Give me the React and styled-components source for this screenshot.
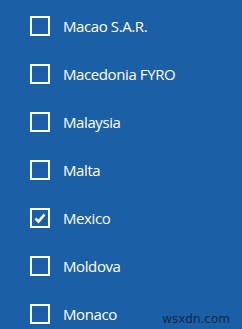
import React, {useState} from "react";
import styled, {createGlobalStyle} from "styled-components";

const GlobalStyle = createGlobalStyle`
    html, body {
        margin: 0;
        padding: 0;
        background: #1b5fa7;
        overflow: hidden;
    }
`;

const Page = styled.div`
    position: relative;
    width: 242px;
    height: 329px;
    background: #1b5fa7;
    font-family: "Open Sans", "Noto Sans", sans-serif;
    overflow: hidden;
`;

const List = styled.ul`
    list-style: none;
    margin: 0;
    padding: 2px 0 0 30px;
    display: flex;
    flex-direction: column;
`;

const Row = styled.li`
    display: flex;
    align-items: center;
    gap: 13px;
    height: 48px;
    cursor: pointer;
`;

const Box = styled.span`
    box-sizing: border-box;
    width: 20px;
    height: 20px;
    border: 2px solid #ffffff;
    display: flex;
    align-items: center;
    justify-content: center;
`;

const Label = styled.span`
    color: #ffffff;
    font-size: 15px;
    letter-spacing: -0.4px;
`;

const Watermark = styled.span`
    position: absolute;
    right: 12px;
    bottom: 3px;
    color: #13284a;
    font-family: "DejaVu Sans", sans-serif;
    font-size: 12px;
`;

const countries = ["Macao S.A.R.", "Macedonia FYRO", "Malaysia", "Malta", "Mexico", "Moldova", "Monaco"];

function App() {
    const [checked, setChecked] = useState({Mexico: true});

    return (
        <>
            <GlobalStyle />
            <Page>
                <List>
                    {countries.map((name) => (
                        <Row key={name} onClick={() => setChecked({...checked, [name]: !checked[name]})}>
                            <Box>
                                {checked[name] && (
                                    <svg width="14" height="14" viewBox="0 0 14 14">
                                        <path d="M2.5 7.5 L5.5 10.5 L11.5 3.5" fill="none" stroke="#fff" strokeWidth="2.6" />
                                    </svg>
                                )}
                            </Box>
                            <Label>{name}</Label>
                        </Row>
                    ))}
                </List>
                <Watermark>wsxdn.com</Watermark>
            </Page>
        </>
    );
}

export default App;
